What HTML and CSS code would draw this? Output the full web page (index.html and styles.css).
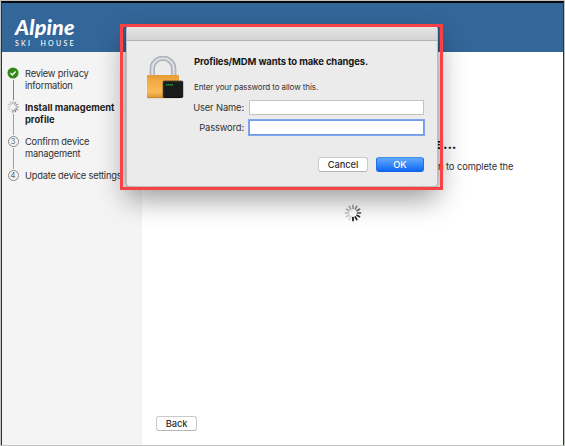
FILE: index.html
```
<!DOCTYPE html>
<html lang="en">
<head>
<meta charset="utf-8">
<title>Alpine Ski House</title>
<link rel="stylesheet" href="styles.css">
</head>
<body>
<div class="window">
  <header class="header">
    <div class="logo"><span class="logo-name">Alpine</span><span class="logo-sub"><span>SKI</span><span>HOUSE</span></span></div>
  </header>
  <div class="body">
    <nav class="sidebar">
      <div class="step">
        <div class="rail done"><svg class="icon" viewBox="0 0 12 12"><circle cx="6" cy="6" r="5.5" fill="#2f8a18"/><path d="M3.5 6.1 5.3 7.9 8.6 4.4" fill="none" stroke="#fff" stroke-width="1.4"/></svg></div>
        <span class="label label-1">Review privacy<br>information</span>
      </div>
      <div class="step">
        <div class="rail"><svg class="icon" viewBox="-6 -6 12 12" fill="none" stroke-width="1.2" stroke-linecap="round"><path d="M0-3.3V-5.4" stroke="#aaa"/><path d="M0-3.3V-5.4" stroke="#999" transform="rotate(30)"/><path d="M0-3.3V-5.4" stroke="#999" transform="rotate(60)"/><path d="M0-3.3V-5.4" stroke="#888" transform="rotate(90)"/><path d="M0-3.3V-5.4" stroke="#808080" transform="rotate(120)"/><path d="M0-3.3V-5.4" stroke="#777" transform="rotate(150)"/><path d="M0-3.3V-5.4" stroke="#888" transform="rotate(180)"/><path d="M0-3.3V-5.4" stroke="#ddd" transform="rotate(210)"/><path d="M0-3.3V-5.4" stroke="#d4d4d4" transform="rotate(240)"/><path d="M0-3.3V-5.4" stroke="#ccc" transform="rotate(270)"/><path d="M0-3.3V-5.4" stroke="#c4c4c4" transform="rotate(300)"/><path d="M0-3.3V-5.4" stroke="#bbb" transform="rotate(330)"/></svg></div>
        <span class="label label-2">Install management<br>profile</span>
      </div>
      <div class="step">
        <div class="rail"><span class="num">3</span></div>
        <span class="label label-3">Confirm device<br>management</span>
      </div>
      <div class="step last">
        <div class="rail"><span class="num">4</span></div>
        <span class="label label-4">Update device settings</span>
      </div>
    </nav>
    <main class="main">
      <h1 class="title">e...</h1>
      <p class="note">n to complete the</p>
      <svg class="spinner" viewBox="-9 -9 18 18" fill="none" stroke-width="1.6" stroke-linecap="round"><path d="M0-4.5V-7.6" stroke="#999"/><path d="M0-4.5V-7.6" stroke="#888" transform="rotate(30)"/><path d="M0-4.5V-7.6" stroke="#666" transform="rotate(60)"/><path d="M0-4.5V-7.6" stroke="#4a4a4a" transform="rotate(90)"/><path d="M0-4.5V-7.6" stroke="#2a2a2a" transform="rotate(120)"/><path d="M0-4.5V-7.6" stroke="#111" transform="rotate(150)"/><path d="M0-4.5V-7.6" stroke="#000" transform="rotate(180)"/><path d="M0-4.5V-7.6" stroke="#d2d2d2" transform="rotate(210)"/><path d="M0-4.5V-7.6" stroke="#ccc" transform="rotate(240)"/><path d="M0-4.5V-7.6" stroke="#c0c0c0" transform="rotate(270)"/><path d="M0-4.5V-7.6" stroke="#b5b5b5" transform="rotate(300)"/><path d="M0-4.5V-7.6" stroke="#aaa" transform="rotate(330)"/></svg>
      <button class="button back">Back</button>
    </main>
  </div>
</div>
<div class="dialog">
  <div class="titlebar"></div>
  <div class="content">
    <svg class="lock" viewBox="0 0 38 44">
      <defs>
        <linearGradient id="gold" x2="0" y2="1"><stop stop-color="#e69a32"/><stop offset=".3" stop-color="#f3ad46"/><stop offset=".75" stop-color="#f8b954"/><stop offset="1" stop-color="#dc9233"/></linearGradient>
      </defs>
      <path d="M6.2 20V13a10.8 10.8 0 0 1 21.6 0V20" fill="none" stroke="#9a9ea5" stroke-width="5"/>
      <path d="M6.2 20V13a10.8 10.8 0 0 1 21.6 0V20" fill="none" stroke="#bcc1c8" stroke-width="3.8"/>
      <path d="M6.2 20V13a10.8 10.8 0 0 1 21.6 0V20" fill="none" stroke="#dde0e4" stroke-width="1.6"/>
      <rect x="1" y="19" width="32" height="23" rx="1" fill="url(#gold)"/>
      <path d="M1 41.7H33" stroke="#c67d25" stroke-width=".7"/>
      <rect x="17.3" y="25.2" width="19.4" height="16.3" rx=".8" fill="#191b1d" stroke="#111"/>
      <path d="M17.8 41V25.6H36.3" fill="none" stroke="#454a4d" stroke-width=".5"/>
      <path d="M20 28.8H27" stroke="#269441" stroke-width="1.5" stroke-dasharray="1.5 .4"/>
    </svg>
    <div class="form">
      <h2 class="heading">Profiles/MDM wants to make changes.</h2>
      <p class="hint">Enter your password to allow this.</p>
      <label class="field"><span class="caption">User Name:</span><input class="input"></label>
      <label class="field"><span class="caption">Password:</span><input class="input focused" type="password"></label>
      <div class="actions"><button class="button cancel">Cancel</button><button class="button primary">OK</button></div>
    </div>
  </div>
</div>
<div class="highlight"></div>
</body>
</html>
```
FILE: styles.css
```
* { box-sizing: border-box; }
body { margin: 0; width: 565px; height: 446px; overflow: hidden; background: #c2c4c2; padding: 1px; font-family: Inter, "Liberation Sans", sans-serif; font-size: 9.3px; letter-spacing: -.2px; color: #303030; }
h1, h2, p { margin: 0; }
.window { display: flex; flex-direction: column; height: 444px; background: #fff; border: solid #303234; border-width: 2px 1px 0; border-top-color: #050b0d; }
.header { height: 49px; flex: none; background: #336699; padding: 14px 0 0 12px; }
.logo { display: flex; flex-direction: column; color: #fff; }
.logo-name { font: italic 900 21.5px/20px Lato, sans-serif; letter-spacing: .15px; padding-left: 1px; white-space: nowrap; }
.logo-sub { display: flex; gap: 8px; font: 500 7px/8px Lato, sans-serif; letter-spacing: 2.3px; padding-left: 1px; margin-top: 2px; }
.body { display: flex; flex: 1; min-height: 0; }
.sidebar { width: 140px; flex: none; background: #f4f4f4; padding: 15px 0 0 5px; }
.step { display: flex; height: 34.3px; gap: 6px; }
.rail { width: 12px; flex: none; display: flex; flex-direction: column; align-items: center; }
.rail::after { content: ""; width: 1px; flex: 1; margin: 1px 0; background: #a0a0a0; }
.rail.done::after { background: #54a344; }
.last .rail::after { display: none; }
.icon { width: 12px; height: 12px; flex: none; }
.num { width: 11px; height: 11px; flex: none; border: 1px solid #888; border-radius: 50%; font-size: 7.5px; line-height: 9px; letter-spacing: 0; text-align: center; color: #666; }
.label { line-height: 12px; padding-top: .5px; white-space: nowrap; }
.label-2 { font-weight: 700; letter-spacing: 0; color: #202020; }
.main { flex: 1; display: flex; flex-direction: column; align-items: flex-start; padding: 83px 0 14px 14px; }
.title { margin-left: 279px; font-size: 14px; line-height: 18px; letter-spacing: -.3px; color: #111; }
.note { margin: 6px 0 0 282px; line-height: 16px; letter-spacing: -.07px; white-space: nowrap; }
.spinner { width: 18px; height: 18px; margin: 29px 0 0 188px; }
.button { height: 15px; padding: 0; border: 1px solid #c9c9c9; border-bottom-color: #b5b5b5; border-radius: 3px; background: #fff; font: 500 9.3px/12px Inter, sans-serif; letter-spacing: -.1px; color: #303030; }
.back { width: 41px; margin-top: auto; }
.dialog { position: absolute; left: 126px; top: 27px; width: 312px; height: 160px; background: #ebebeb; border: 1px solid #bcbcbc; border-top: 0; border-radius: 2px 2px 4px 4px; box-shadow: 0 12px 28px rgba(0,0,0,.4), 0 0 3px rgba(0,0,0,.25); }
.titlebar { height: 14px; background: linear-gradient(#e5e5e5, #d2d2d2); border-bottom: 1px solid #b3b3b3; }
.content { display: flex; padding: 15px 13px 0 19px; gap: 10px; }
.lock { width: 38px; height: 44px; flex: none; }
.form { flex: 1; min-width: 0; display: flex; flex-direction: column; }
.heading { font-size: 9.5px; line-height: 12px; letter-spacing: -.13px; color: #171717; white-space: nowrap; }
.hint { font-size: 8px; line-height: 10px; letter-spacing: -.1px; margin: 14px 0 8px; white-space: nowrap; }
.field { display: flex; align-items: center; justify-content: flex-end; gap: 5px; height: 15px; margin-bottom: 5px; }
.caption { white-space: nowrap; letter-spacing: -.1px; }
.input { width: 175px; height: 15px; flex: none; padding: 0; border: 1px solid #c2c2c2; border-radius: 0; background: #fff; }
.focused { border-color: #739cec; outline: 1px solid #81a5ed; }
.actions { display: flex; justify-content: flex-end; gap: 8px; margin-top: 17px; }
.cancel { width: 50px; }
.primary { width: 48px; color: #fff; border-color: #3f8ef2 #236ee0 #1762dd; background: linear-gradient(#63a9fb, #0f68f5); }
.highlight { position: absolute; left: 120px; top: 24px; width: 323px; height: 166px; border: 3px solid #fb4146; }
```
